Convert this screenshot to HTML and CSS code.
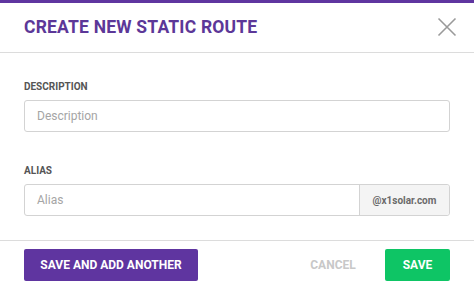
FILE: index.html
```html
<!DOCTYPE html>
<html>
<head>
<meta charset="utf-8">
<link rel="stylesheet" href="styles.css">
</head>
<body>
<div class="dialog">
  <div class="header">
    <h1 class="title">CREATE NEW STATIC ROUTE</h1>
    <button class="close" aria-label="Close">
      <svg width="20" height="20" viewBox="0 0 20 20"><path d="M1.5 1.5 L18.5 18.5 M18.5 1.5 L1.5 18.5" stroke="#9a9a9a" stroke-width="1.6" fill="none"/></svg>
    </button>
  </div>
  <div class="body">
    <div class="field">
      <label class="label">DESCRIPTION</label>
      <div class="input"><span class="placeholder">Description</span></div>
    </div>
    <div class="field field-2">
      <label class="label">ALIAS</label>
      <div class="input group">
        <span class="placeholder grow">Alias</span>
        <span class="addon">@x1solar.com</span>
      </div>
    </div>
  </div>
  <div class="footer">
    <button class="btn btn-purple">SAVE AND ADD ANOTHER</button>
    <div class="right">
      <button class="btn btn-cancel">CANCEL</button>
      <button class="btn btn-green">SAVE</button>
    </div>
  </div>
</div>
</body>
</html>
```
FILE: styles.css
```css
html, body {
  margin: 0;
  padding: 0;
  background: #fff;
}
body {
  font-family: Roboto, "Liberation Sans", sans-serif;
  width: 474px;
  height: 291px;
  overflow: hidden;
}
.dialog {
  border-top: 3px solid #5f35a0;
}
.header {
  height: 47px;
  border-bottom: 1px solid #dcdcdc;
  display: flex;
  align-items: center;
  justify-content: space-between;
  padding: 0 17px 2px 24px;
}
.title {
  margin: 0;
  font-size: 17.5px;
  font-weight: 700;
  color: #5c3798;
  letter-spacing: 0.2px;
}
.close {
  border: 0;
  background: none;
  padding: 0;
  width: 20px;
  height: 20px;
  display: flex;
}
.body {
  padding: 28px 24px 24px;
}
.field-2 {
  margin-top: 33px;
}
.label {
  display: block;
  font-size: 10px;
  line-height: 12px;
  font-weight: 700;
  color: #555;
  margin-bottom: 7px;
}
.input {
  height: 30px;
  border: 1px solid #d3d3d3;
  border-radius: 3px;
  display: flex;
  align-items: center;
}
.placeholder {
  font-size: 12px;
  color: #a5a5a5;
  padding-left: 12px;
}
.grow {
  flex: 1;
}
.addon {
  align-self: stretch;
  display: flex;
  align-items: center;
  justify-content: center;
  width: 89px;
  background: #f4f4f4;
  border-left: 1px solid #d3d3d3;
  font-size: 10px;
  font-weight: 700;
  color: #6a6a6a;
  border-radius: 0 3px 3px 0;
}
.footer {
  border-top: 1px solid #dcdcdc;
  padding: 8px 24px;
  display: flex;
  justify-content: space-between;
  align-items: center;
}
.right {
  display: flex;
  align-items: center;
}
.btn {
  font-family: Roboto, "Liberation Sans", sans-serif;
  font-size: 12px;
  font-weight: 700;
  height: 32px;
  border: 0;
  border-radius: 2px;
  color: #fff;
  cursor: pointer;
}
.btn-purple {
  background: #5f35a0;
  width: 174px;
}
.btn-cancel {
  background: none;
  color: #c8c8c8;
  width: 60px;
  margin-right: 22px;
}
.btn-green {
  background: #0ec565;
  width: 65px;
}
```
